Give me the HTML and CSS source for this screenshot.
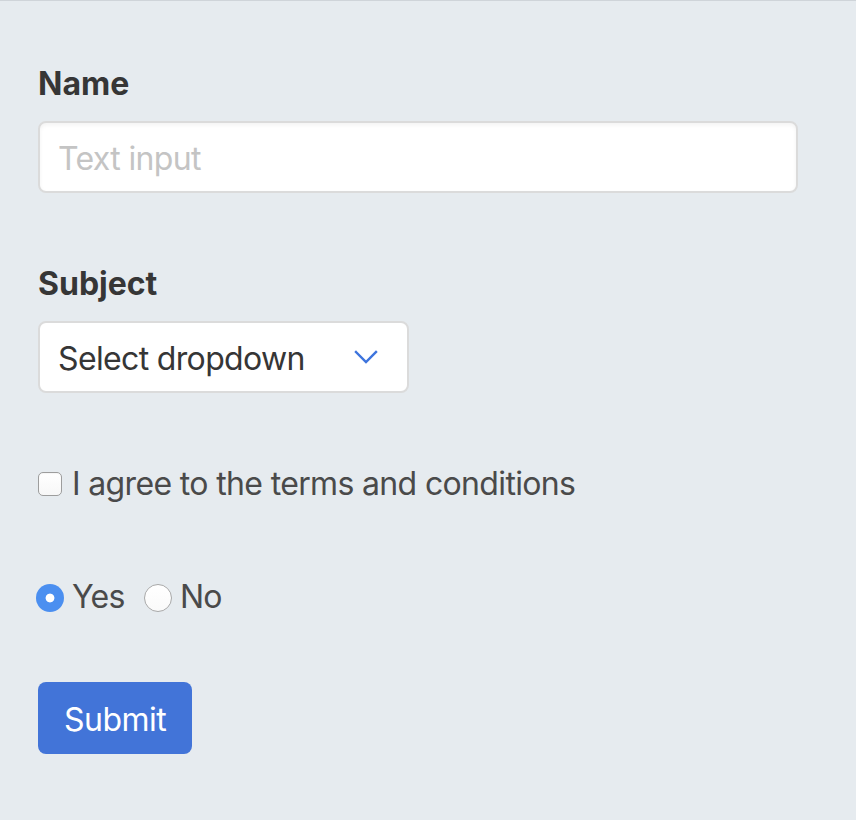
FILE: index.html
```html
<!DOCTYPE html>
<html lang="en">
<head>
<meta charset="utf-8">
<title>Form</title>
<link rel="stylesheet" href="styles.css">
</head>
<body>
<form class="form">
  <div class="field field-name">
    <label class="label" for="name">Name</label>
    <input class="input" id="name" type="text" placeholder="Text input">
  </div>
  <div class="field field-subject">
    <label class="label" for="subject">Subject</label>
    <div class="select-wrap">
      <select class="select" id="subject">
        <option>Select dropdown</option>
        <option>With options</option>
      </select>
      <svg class="chevron" width="24" height="14" viewBox="0 0 24 14" aria-hidden="true">
        <polyline points="2,2 12,12 22,2" fill="none" stroke="#3d74dd" stroke-width="2.4" stroke-linecap="square" stroke-linejoin="miter"/>
      </svg>
    </div>
  </div>
  <div class="field field-check">
    <label class="check-label">
      <input class="checkbox" type="checkbox">
      <span>I agree to the terms and conditions</span>
    </label>
  </div>
  <div class="field field-radio">
    <label class="radio-label">
      <input class="radio" type="radio" name="q" checked>
      <span>Yes</span>
    </label>
    <label class="radio-label">
      <input class="radio" type="radio" name="q">
      <span>No</span>
    </label>
  </div>
  <div class="field field-submit">
    <button class="button" type="button">Submit</button>
  </div>
</form>
</body>
</html>
```

FILE: styles.css
```css
html, body {
  margin: 0;
  padding: 0;
}
body {
  background: #e6ebef;
  border-top: 1px solid #cfd4d9;
  font-family: Inter, "Noto Sans", "Liberation Sans", sans-serif;
  font-size: 32px;
  line-height: 48px;
  color: #4a4a4a;
  min-height: 819px;
  letter-spacing: -0.65px;
}
.form {
  display: flex;
  flex-direction: column;
  padding: 56px 0 0 38px;
}
.field {
  display: flex;
  flex-direction: column;
  align-items: flex-start;
}
.label {
  font-weight: 700;
  color: #363636;
  letter-spacing: 0;
  padding-top: 3px;
  margin-bottom: 13px;
}
.input {
  box-sizing: border-box;
  width: 760px;
  height: 72px;
  border: 2px solid #dbdbdb;
  border-radius: 8px;
  background: #fff;
  box-shadow: inset 0 2px 4px rgba(10, 10, 10, 0.05);
  padding: 3px 18px 0;
  font: inherit;
  letter-spacing: inherit;
  color: #363636;
  outline: none;
}
.input::placeholder {
  color: #c4c4c4;
}
.field-name {
  margin-bottom: 64px;
}
.select-wrap {
  position: relative;
}
.select {
  appearance: none;
  -webkit-appearance: none;
  box-sizing: border-box;
  width: 371px;
  height: 72px;
  border: 2px solid #dbdbdb;
  border-radius: 8px;
  background: #fff;
  padding: 3px 18px 0;
  font: inherit;
  letter-spacing: inherit;
  color: #363636;
  outline: none;
}
.chevron {
  position: absolute;
  right: 31px;
  top: 29px;
  pointer-events: none;
}
.field-subject {
  margin-bottom: 67px;
}
.check-label,
.radio-label {
  display: inline-flex;
  align-items: center;
  color: #4a4a4a;
}
.checkbox {
  appearance: none;
  -webkit-appearance: none;
  box-sizing: border-box;
  width: 24px;
  height: 24px;
  margin: 0 10px 0 0;
  border: 1px solid #9d9d9d;
  border-radius: 5px;
  background: linear-gradient(#ffffff, #f7f7f7);
  box-shadow: inset 0 1px 1px rgba(0, 0, 0, 0.04);
}
.field-check {
  margin-bottom: 66px;
}
.field-radio {
  flex-direction: row;
  align-items: center;
  gap: 19px;
  margin-left: -2px;
  margin-bottom: 61px;
}
.radio-label span {
  margin-top: -1px;
}
.radio {
  appearance: none;
  -webkit-appearance: none;
  box-sizing: border-box;
  width: 28px;
  height: 28px;
  margin: 0 8px 0 0;
  border: 1px solid #a9a9a9;
  border-radius: 50%;
  background: linear-gradient(#ffffff, #fafafa);
  position: relative;
}
.radio:checked {
  border: none;
  background: radial-gradient(circle, #ffffff 0 4px, #4b8ff0 4.8px);
}
.button {
  box-sizing: border-box;
  height: 72px;
  padding: 3px 26px 0;
  border: none;
  border-radius: 8px;
  background: #4274d8;
  color: #fff;
  font: inherit;
  letter-spacing: -0.5px;
  cursor: pointer;
}
```
